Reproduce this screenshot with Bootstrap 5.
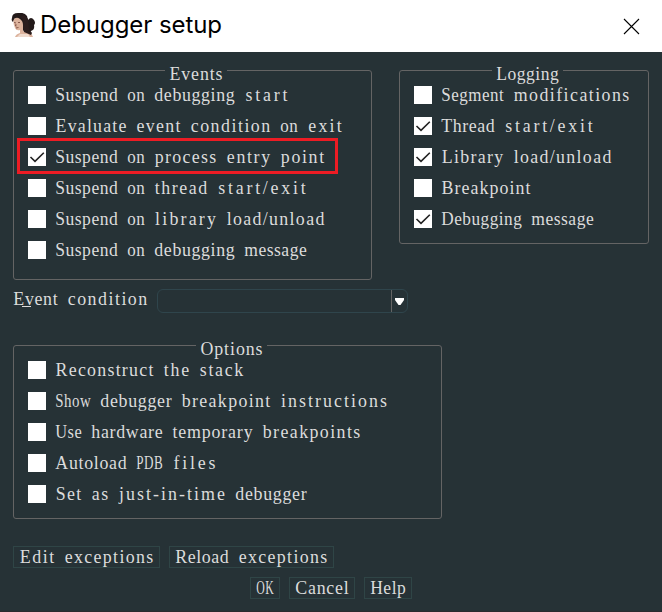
<!DOCTYPE html>
<html lang="en">
<head>
<meta charset="utf-8">
<title>Debugger setup</title>
<link href="https://cdn.jsdelivr.net/npm/bootstrap@5.3.0/dist/css/bootstrap.min.css" rel="stylesheet">
<style>
body{width:662px;height:612px;background:#263236;color:#dcdcdc;font:19px/20px "Liberation Serif",serif;overflow:hidden;border-bottom:1px solid #2b2b2f}
.titlebar{height:52px;padding:0 22px 0 10px;color:#000}
.caption{font:24px/30px Inter,"Noto Sans",sans-serif;width:182px;margin:-2px 0 0 4px}
.content-area{padding:12px 13px 0}
.cell{word-spacing:4.25px;white-space:pre}
.word{display:inline-block;transform-origin:0 50%;line-height:20px;vertical-align:top}
.group{border:1px solid #646464;border-radius:3px;margin-top:6px;padding-left:14px;padding-right:7px}
.group-title{height:20px;margin:-7px auto -5px;padding:0 4px;background:#263236;width:max-content;position:relative}
.opt{height:31px}
.opt .form-check-input{width:18px;height:18px;margin:0 9px 0 0;border:0;border-radius:0;background-color:#fff;box-shadow:none;flex:none}
.opt .form-check-input:checked{background-size:18px;background-image:url("data:image/svg+xml,%3Csvg xmlns='http://www.w3.org/2000/svg' viewBox='0 0 18 18'%3E%3Cpath d='M2.5 9 7 13.3 15.8 4.7' fill='none' stroke='%23222' stroke-width='1.6'/%3E%3C/svg%3E")}
.events{width:359px;height:210px}
.logging{width:250px;height:174px}
.options{width:429px;height:174px}
.marked{outline:3px solid #ed1c24;outline-offset:0;width:315px;height:30px;margin:0 0 1px -8px;padding:1px 0 0 8px}
.combo{width:251px;height:24px;margin-left:9px;border:1px solid #2f454c;border-radius:6px}
.combo-arrow{width:16px;border-left:1px solid #646464}
.push{height:22px;padding:0 5px;border:1px solid #2f4546;border-radius:0;color:#dcdcdc;font:inherit;line-height:20px;background:none}
.access-key{background:linear-gradient(#dcdcdc,#dcdcdc) 9px 100%/9px 1px no-repeat;height:18px;line-height:20px}
</style>
<script src="https://cdn.jsdelivr.net/npm/bootstrap@5.3.0/dist/js/bootstrap.bundle.min.js"></script>
</head>
<body>
<header class="titlebar bg-white d-flex align-items-center">
<svg width="26" height="26" viewBox="0 0 26 26"><path d="M2 5Q2 0 8 0q6-1 9 3l1 4q3-4 6 0 2 3 0 5 1 5-3 6l-2 2-7-3L5 5 3 9Q1 8 2 5Z" fill="#231a1a"/><path d="M3.500 7Q6 3 10 6q3 2 3 6l0 6 8 2 2 4H5q1-3 5-4v-3q-4 1-5-2-2-4-1.500-8Z" fill="#dcb39d"/><path d="m4 9.500 2 .5m2-.5 2 0M6 11l-.5 2h1M6 15l2.500-.5" stroke="#7d4e41" stroke-width=".9" fill="none"/><path d="M10 21l8 0 2 3H7Z" fill="#f0dacd"/><path d="M10 4q5 3 3 9l1 6 7 3 1-2-3-4-1-10-4-4Z" fill="#2b1d1d"/></svg>
<div class="caption text-nowrap" id="caption">Debugger setup</div>
<svg class="ms-auto" width="17" height="17" viewBox="0 0 17 17"><path d="m1 1 15 15M16 1 1 16" stroke="#000" stroke-width="1.1"/></svg>
</header>
<main class="content-area">
<div class="d-flex align-items-start justify-content-between">
<section class="group events">
<div class="group-title cell">Events</div>
<label class="opt d-flex align-items-center"><input class="form-check-input" type="checkbox"><span class="cell">Suspend on debugging start</span></label>
<label class="opt d-flex align-items-center"><input class="form-check-input" type="checkbox"><span class="cell">Evaluate event condition on exit</span></label>
<label class="opt marked d-flex align-items-center"><input class="form-check-input" type="checkbox" checked><span class="cell">Suspend on process entry point</span></label>
<label class="opt d-flex align-items-center"><input class="form-check-input" type="checkbox"><span class="cell">Suspend on thread start/exit</span></label>
<label class="opt d-flex align-items-center"><input class="form-check-input" type="checkbox"><span class="cell">Suspend on library load/unload</span></label>
<label class="opt d-flex align-items-center"><input class="form-check-input" type="checkbox"><span class="cell">Suspend on debugging message</span></label>
</section>
<section class="group logging">
<div class="group-title cell">Logging</div>
<label class="opt d-flex align-items-center"><input class="form-check-input" type="checkbox"><span class="cell">Segment modifications</span></label>
<label class="opt d-flex align-items-center"><input class="form-check-input" type="checkbox" checked><span class="cell">Thread start/exit</span></label>
<label class="opt d-flex align-items-center"><input class="form-check-input" type="checkbox" checked><span class="cell">Library load/unload</span></label>
<label class="opt d-flex align-items-center"><input class="form-check-input" type="checkbox"><span class="cell">Breakpoint</span></label>
<label class="opt d-flex align-items-center"><input class="form-check-input" type="checkbox" checked><span class="cell">Debugging message</span></label>
</section>
</div>
<div class="d-flex" style="margin-top:9px;height:24px">
<span class="cell access-key">Event condition</span>
<div class="combo d-flex justify-content-end"><div class="combo-arrow d-flex align-items-center justify-content-center"><svg width="9" height="7" viewBox="0 0 9 7"><path d="M0 0h9v2L5.5 7h-2L0 2Z" fill="#fff"/></svg></div></div>
</div>
<section class="group options" style="margin-top:32px">
<div class="group-title cell">Options</div>
<label class="opt d-flex align-items-center"><input class="form-check-input" type="checkbox"><span class="cell">Reconstruct the stack</span></label>
<label class="opt d-flex align-items-center"><input class="form-check-input" type="checkbox"><span class="cell">Show debugger breakpoint instructions</span></label>
<label class="opt d-flex align-items-center"><input class="form-check-input" type="checkbox"><span class="cell">Use hardware temporary breakpoints</span></label>
<label class="opt d-flex align-items-center"><input class="form-check-input" type="checkbox"><span class="cell">Autoload PDB files</span></label>
<label class="opt d-flex align-items-center"><input class="form-check-input" type="checkbox"><span class="cell">Set as just-in-time debugger</span></label>
</section>
<div class="d-flex" style="gap:9px;margin-top:27px">
<button class="btn push cell">Edit exceptions</button><button class="btn push cell">Reload exceptions</button>
</div>
<div class="d-flex" style="gap:9px;margin:9px 0 0 237px">
<button class="btn push cell">OK</button><button class="btn push cell">Cancel</button><button class="btn push cell">Help</button>
</div>
</main>
<script>
// Fit each word to a 9px character grid: condense the glyphs a little
// (more for wide words), then share the remaining room between the letters.
document.querySelectorAll('.cell').forEach(el => {
  const parts = el.textContent.split(' ');
  el.textContent = '';
  parts.forEach((word, i) => {
    if (i) el.append(' ');
    const s = document.createElement('span');
    s.className = 'word';
    s.textContent = word;
    el.append(s);
    const target = word.length * 9;
    const natural = s.getBoundingClientRect().width;
    const scale = Math.min(0.94, (target - word.length * 0.5) / natural);
    const gap = (target / scale - natural) / word.length;
    s.style.width = target + 'px';
    s.style.letterSpacing = gap + 'px';
    s.style.textIndent = gap / 2 + 'px';
    s.style.transform = `scaleX(${scale})`;
  });
});
const cap = document.getElementById('caption');
const range = document.createRange();
range.selectNodeContents(cap);
cap.style.letterSpacing = (182 - range.getBoundingClientRect().width) / 14 + 'px';
</script>
</body>
</html>
